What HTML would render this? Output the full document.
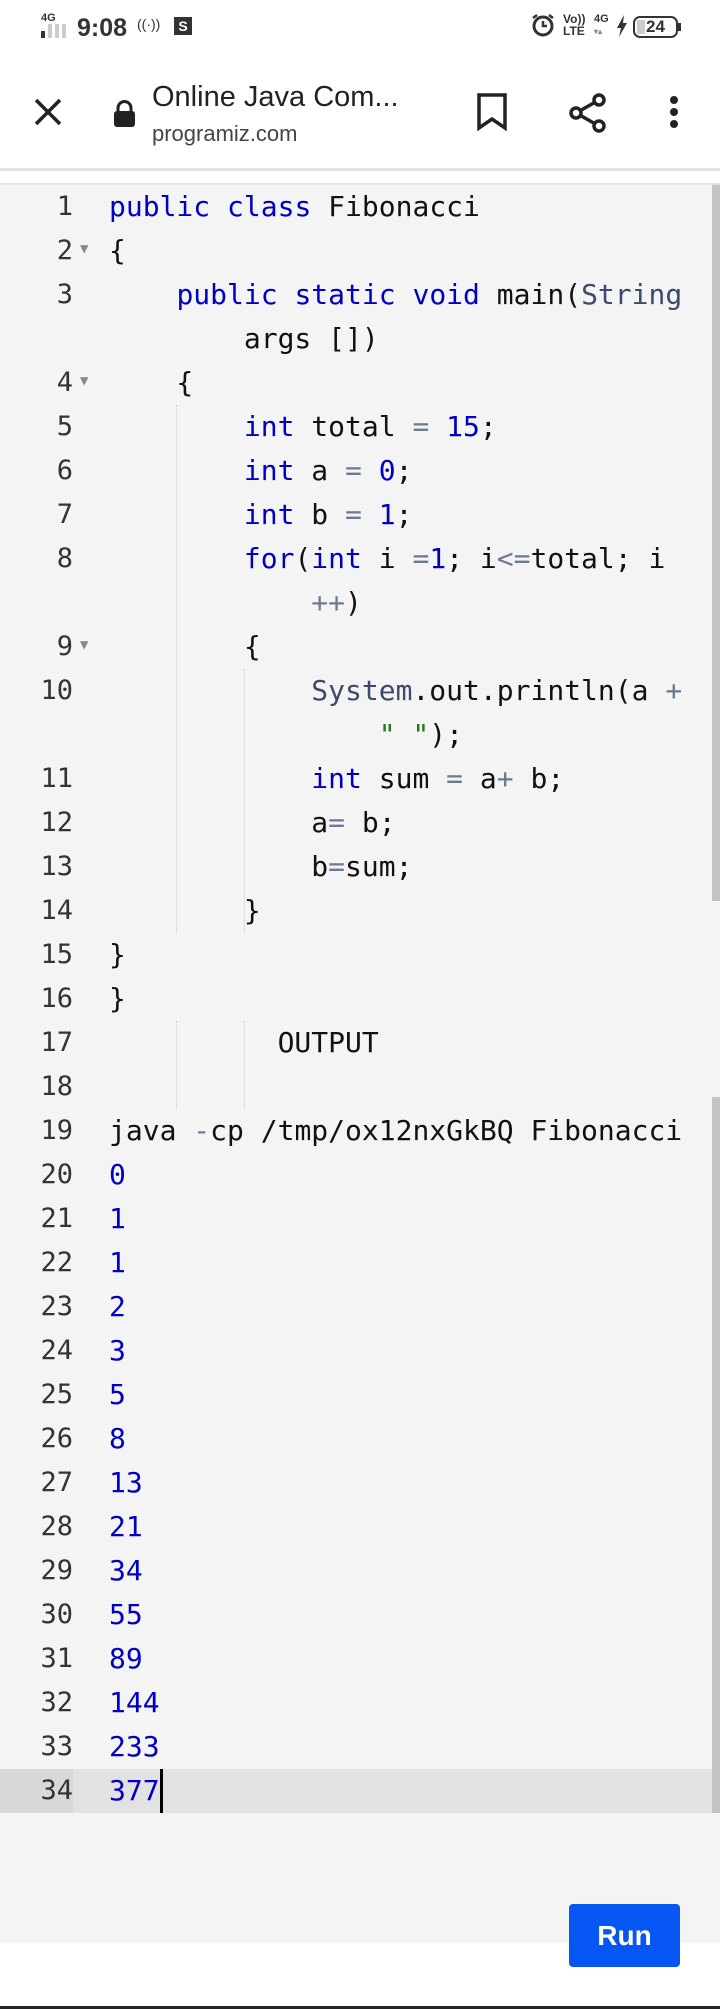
<!DOCTYPE html>
<html><head><meta charset="utf-8"><style>
*{margin:0;padding:0;box-sizing:border-box}
body{width:720px;height:2009px;background:#fff;position:relative;overflow:hidden;font-family:"Liberation Sans",sans-serif}
.abs{position:absolute}
#ed{position:absolute;left:0;top:183px;width:720px;height:1760px;background:#f4f4f4;border-top:2px solid #e4e4e4}
.row{position:absolute;left:0;width:712px;height:44px;line-height:44px;font-family:"DejaVu Sans Mono","Liberation Mono",monospace;font-size:28px;color:#111;white-space:pre}
.ln{position:absolute;left:0;width:73px;text-align:right;color:#333;font-size:27px}
.cd{position:absolute;left:109px;top:0}
.fold{position:absolute;left:80px;top:0;font-size:14px;color:#888;line-height:40px}
.k{color:#0000c4}.n{color:#0000c4}.t{color:#3c4a6b}.o{color:#6a7a90}.s{color:#1a7a1a}
.g{position:absolute;width:0;border-left:1px dotted #c9c9c9}
</style></head><body>
<!-- status bar -->
<div class="abs" style="left:41px;top:12px;font-size:11px;font-weight:bold;color:#333">4G</div>
<div class="abs" style="left:41px;top:31px;width:4px;height:7px;background:#333"></div>
<div class="abs" style="left:48px;top:24px;width:4px;height:14px;background:#ccc"></div>
<div class="abs" style="left:55px;top:24px;width:4px;height:14px;background:#ccc"></div>
<div class="abs" style="left:62px;top:24px;width:4px;height:14px;background:#ccc"></div>
<div class="abs" style="left:77px;top:14px;font-size:25px;font-weight:bold;color:#333">9:08</div>
<div class="abs" style="left:137px;top:16px;font-size:14px;color:#333">((·))</div>
<div class="abs" style="left:174px;top:17px;width:18px;height:18px;background:#333;color:#fff;font-size:14px;font-weight:bold;text-align:center;line-height:18px">S</div>
<svg class="abs" style="left:530px;top:12px" width="26" height="26" viewBox="0 0 26 26"><circle cx="13" cy="14" r="9" fill="none" stroke="#333" stroke-width="3"/><path d="M13 9v5h4" stroke="#333" stroke-width="2.5" fill="none"/><path d="M3 6l4-3M23 6l-4-3" stroke="#333" stroke-width="2.5"/></svg>
<div class="abs" style="left:563px;top:13px;font-size:12px;font-weight:bold;color:#333;line-height:12px">Vo))<br>LTE</div>
<div class="abs" style="left:594px;top:13px;font-size:11px;font-weight:bold;color:#333;line-height:12px">4G<br><span style="font-size:8px;color:#888">▾▴</span></div>
<svg class="abs" style="left:616px;top:15px" width="12" height="22" viewBox="0 0 12 22"><path d="M8 0L1 13h4l-2 9 8-14H7z" fill="#333"/></svg>
<div class="abs" style="left:633px;top:16px;width:45px;height:22px;border:2.5px solid #333;border-radius:7px;font-size:17px;font-weight:bold;color:#333;text-align:center;line-height:17px">24</div>
<div class="abs" style="left:637px;top:20px;width:8px;height:14px;background:#ccc"></div>
<div class="abs" style="left:678px;top:23px;width:3px;height:8px;background:#333"></div>
<!-- toolbar -->
<svg class="abs" style="left:33px;top:97px" width="30" height="30" viewBox="0 0 30 30"><path d="M3 3L27 27M27 3L3 27" stroke="#222" stroke-width="3.5"/></svg>
<svg class="abs" style="left:113px;top:100px" width="23" height="27" viewBox="0 0 23 27"><path d="M5 12V8a6.5 6.5 0 0 1 13 0v4" fill="none" stroke="#222" stroke-width="3"/><rect x="1" y="11" width="21" height="16" rx="3" fill="#222"/></svg>
<div class="abs" style="left:152px;top:81px;font-size:29px;color:#222">Online Java Com...</div>
<div class="abs" style="left:152px;top:121px;font-size:22px;color:#444">programiz.com</div>
<svg class="abs" style="left:476px;top:93px" width="32" height="38" viewBox="0 0 32 38"><path d="M3 2h26v33L16 26 3 35z" fill="none" stroke="#222" stroke-width="3.5" stroke-linejoin="miter"/></svg>
<svg class="abs" style="left:567px;top:92px" width="42" height="42" viewBox="0 0 42 42"><path d="M9 21L32 8M9 21L32 34" stroke="#222" stroke-width="3.5"/><circle cx="32" cy="8" r="5" fill="#fff" stroke="#222" stroke-width="3.5"/><circle cx="9" cy="21" r="5" fill="#fff" stroke="#222" stroke-width="3.5"/><circle cx="32" cy="34" r="5" fill="#fff" stroke="#222" stroke-width="3.5"/></svg>
<div class="abs" style="left:670px;top:96px;width:8px;height:8px;border-radius:4px;background:#222"></div>
<div class="abs" style="left:670px;top:108px;width:8px;height:8px;border-radius:4px;background:#222"></div>
<div class="abs" style="left:670px;top:120px;width:8px;height:8px;border-radius:4px;background:#222"></div>
<div class="abs" style="left:0;top:168px;width:720px;height:3px;background:#e2e2e2"></div>
<!-- editor -->
<div id="ed"></div>
<div class="abs" style="left:0;top:1769px;width:712px;height:44px;background:#e2e2e2"></div>
<div class="abs" style="left:0;top:1769px;width:73px;height:44px;background:#d8d8d8"></div>
<div class="abs" style="left:712px;top:185px;width:8px;height:716px;background:#c4c4c4"></div>
<div class="abs" style="left:712px;top:1097px;width:8px;height:716px;background:#c4c4c4"></div>
<!-- indent guides -->
<div class="g" style="left:176px;top:405px;height:528px"></div>
<div class="g" style="left:176px;top:1021px;height:88px"></div>
<div class="g" style="left:244px;top:669px;height:264px"></div>
<div class="g" style="left:244px;top:1021px;height:88px"></div>

<div class="row" style="top:185px"><span class="ln">1</span><span class="cd"><span class="k">public</span> <span class="k">class</span> Fibonacci</span></div>
<div class="row" style="top:229px"><span class="ln">2</span><span class="fold">▼</span><span class="cd">{</span></div>
<div class="row" style="top:273px"><span class="ln">3</span><span class="cd">    <span class="k">public</span> <span class="k">static</span> <span class="k">void</span> main(<span class="t">String</span></span></div>
<div class="row" style="top:317px"><span class="cd">        args [])</span></div>
<div class="row" style="top:361px"><span class="ln">4</span><span class="fold">▼</span><span class="cd">    {</span></div>
<div class="row" style="top:405px"><span class="ln">5</span><span class="cd">        <span class="k">int</span> total <span class="o">=</span> <span class="n">15</span>;</span></div>
<div class="row" style="top:449px"><span class="ln">6</span><span class="cd">        <span class="k">int</span> a <span class="o">=</span> <span class="n">0</span>;</span></div>
<div class="row" style="top:493px"><span class="ln">7</span><span class="cd">        <span class="k">int</span> b <span class="o">=</span> <span class="n">1</span>;</span></div>
<div class="row" style="top:537px"><span class="ln">8</span><span class="cd">        <span class="k">for</span>(<span class="k">int</span> i <span class="o">=</span><span class="n">1</span>; i<span class="o">&lt;=</span>total; i</span></div>
<div class="row" style="top:581px"><span class="cd">            <span class="o">++</span>)</span></div>
<div class="row" style="top:625px"><span class="ln">9</span><span class="fold">▼</span><span class="cd">        {</span></div>
<div class="row" style="top:669px"><span class="ln">10</span><span class="cd">            <span class="t">System</span>.out.println(a <span class="o">+</span></span></div>
<div class="row" style="top:713px"><span class="cd">                <span class="s">" "</span>);</span></div>
<div class="row" style="top:757px"><span class="ln">11</span><span class="cd">            <span class="k">int</span> sum <span class="o">=</span> a<span class="o">+</span> b;</span></div>
<div class="row" style="top:801px"><span class="ln">12</span><span class="cd">            a<span class="o">=</span> b;</span></div>
<div class="row" style="top:845px"><span class="ln">13</span><span class="cd">            b<span class="o">=</span>sum;</span></div>
<div class="row" style="top:889px"><span class="ln">14</span><span class="cd">        }</span></div>
<div class="row" style="top:933px"><span class="ln">15</span><span class="cd">}</span></div>
<div class="row" style="top:977px"><span class="ln">16</span><span class="cd">}</span></div>
<div class="row" style="top:1021px"><span class="ln">17</span><span class="cd">          OUTPUT</span></div>
<div class="row" style="top:1065px"><span class="ln">18</span></div>
<div class="row" style="top:1109px"><span class="ln">19</span><span class="cd">java <span class="o">-</span>cp /tmp/ox12nxGkBQ Fibonacci</span></div>
<div class="row" style="top:1153px"><span class="ln">20</span><span class="cd n">0</span></div>
<div class="row" style="top:1197px"><span class="ln">21</span><span class="cd n">1</span></div>
<div class="row" style="top:1241px"><span class="ln">22</span><span class="cd n">1</span></div>
<div class="row" style="top:1285px"><span class="ln">23</span><span class="cd n">2</span></div>
<div class="row" style="top:1329px"><span class="ln">24</span><span class="cd n">3</span></div>
<div class="row" style="top:1373px"><span class="ln">25</span><span class="cd n">5</span></div>
<div class="row" style="top:1417px"><span class="ln">26</span><span class="cd n">8</span></div>
<div class="row" style="top:1461px"><span class="ln">27</span><span class="cd n">13</span></div>
<div class="row" style="top:1505px"><span class="ln">28</span><span class="cd n">21</span></div>
<div class="row" style="top:1549px"><span class="ln">29</span><span class="cd n">34</span></div>
<div class="row" style="top:1593px"><span class="ln">30</span><span class="cd n">55</span></div>
<div class="row" style="top:1637px"><span class="ln">31</span><span class="cd n">89</span></div>
<div class="row" style="top:1681px"><span class="ln">32</span><span class="cd n">144</span></div>
<div class="row" style="top:1725px"><span class="ln">33</span><span class="cd n">233</span></div>
<div class="row" style="top:1769px"><span class="ln">34</span><span class="cd n">377</span></div>
<div class="abs" style="left:160px;top:1769px;width:3px;height:44px;background:#000"></div>
<!-- run -->
<div class="abs" style="left:569px;top:1904px;width:111px;height:63px;background:#0556f3;border-radius:4px;color:#fff;font-size:28px;font-weight:bold;text-align:center;line-height:63px">Run</div>
<div class="abs" style="left:0;top:2006px;width:720px;height:3px;background:#222"></div>
</body></html>
